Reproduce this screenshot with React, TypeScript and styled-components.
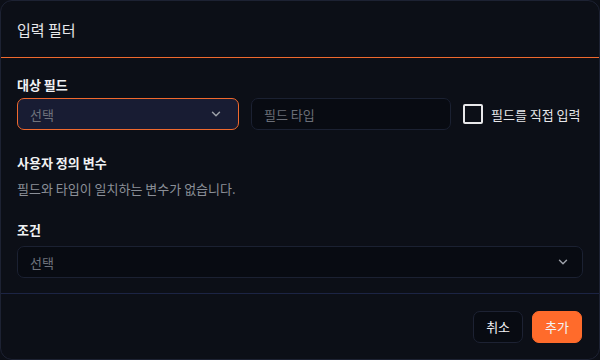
import React from 'react';
import styled, { createGlobalStyle } from 'styled-components';

const GlobalStyle = createGlobalStyle`
  html, body {
    margin: 0;
    padding: 0;
    background: #0c0f17;
  }
  body {
    font-family: "Noto Sans CJK KR", "Noto Sans", sans-serif;
  }
`;

const Dialog = styled.div`
  box-sizing: border-box;
  width: 600px;
  height: 360px;
  background: #0c0f17;
  border: 1px solid #1d2233;
  border-radius: 12px;
  display: flex;
  flex-direction: column;
  overflow: hidden;
`;

const Header = styled.div`
  flex-shrink: 0;
  height: 56px;
  padding: 0 16px;
  display: flex;
  align-items: center;
  border-bottom: 1px solid #f0692e;
  color: #e8e9ec;
  font-size: 15px;
  font-weight: 400;
`;

const Body = styled.div`
  flex: 1;
  min-height: 0;
  padding: 18px 16px 0;
  display: flex;
  flex-direction: column;
`;

const Section = styled.div<{ $gap?: number; $after?: number }>`
  display: flex;
  flex-direction: column;
  gap: ${({ $gap }) => $gap ?? 6}px;
  margin-bottom: ${({ $after }) => $after ?? 0}px;
`;

const Label = styled.div`
  color: #f1f2f4;
  font-size: 13px;
  font-weight: 700;
  line-height: 18px;
`;

const Hint = styled.div`
  color: #8b8f98;
  font-size: 13px;
  line-height: 18px;
`;

const Row = styled.div`
  display: flex;
  align-items: center;
  gap: 12px;
`;

const Select = styled.div<{ $active?: boolean; $width?: string }>`
  box-sizing: border-box;
  width: ${({ $width }) => $width ?? '100%'};
  height: 32px;
  padding: 0 ${({ $active }) => ($active ? 15 : 12)}px 0 12px;
  display: flex;
  align-items: center;
  justify-content: space-between;
  border-radius: 7px;
  border: 1px solid ${({ $active }) => ($active ? '#f0692e' : '#1b2132')};
  background: ${({ $active }) => ($active ? '#181c33' : '#080b12')};
  color: #6f737c;
  font-size: 13px;
`;

const Input = styled.div`
  box-sizing: border-box;
  width: 200px;
  height: 32px;
  padding: 0 12px;
  display: flex;
  align-items: center;
  border-radius: 7px;
  border: 1px solid #1b2132;
  background: #080b12;
  color: #6a6e77;
  font-size: 13px;
`;

const CheckWrap = styled.label`
  display: flex;
  align-items: center;
  gap: 8px;
  color: #e6e7ea;
  font-size: 13px;
`;

const CheckBox = styled.span`
  box-sizing: border-box;
  width: 20px;
  height: 20px;
  border: 2px solid #e8e8ea;
  border-radius: 2px;
`;

const Footer = styled.div`
  flex-shrink: 0;
  height: 65px;
  border-top: 1px solid #1c2444;
  padding: 0 17px 0 0;
  display: flex;
  align-items: center;
  justify-content: flex-end;
  gap: 9px;
`;

const Button = styled.button<{ $primary?: boolean }>`
  box-sizing: border-box;
  height: 32px;
  padding: 0 12px;
  border-radius: 7px;
  font-family: inherit;
  font-size: 13px;
  color: #f3f3f5;
  border: 1px solid ${({ $primary }) => ($primary ? '#ff6b2b' : '#1d2233')};
  background: ${({ $primary }) => ($primary ? '#ff6b2b' : '#080b12')};
`;

const Chevron = () => (
  <svg width="14" height="14" viewBox="0 0 24 24" fill="none" stroke="#9a9ea6" strokeWidth="2.5" strokeLinecap="round" strokeLinejoin="round">
    <polyline points="6 9 12 15 18 9" />
  </svg>
);

export default function App() {
  return (
    <>
      <GlobalStyle />
      <Dialog>
        <Header>입력 필터</Header>
        <Body>
          <Section $gap={4} $after={24}>
            <Label>대상 필드</Label>
            <Row>
              <Select $active $width="222px">
                <span>선택</span>
                <Chevron />
              </Select>
              <Input>필드 타입</Input>
              <CheckWrap>
                <CheckBox />
                필드를 직접 입력
              </CheckWrap>
            </Row>
          </Section>
          <Section $gap={8} $after={23}>
            <Label>사용자 정의 변수</Label>
            <Hint>필드와 타입이 일치하는 변수가 없습니다.</Hint>
          </Section>
          <Section $gap={7}>
            <Label>조건</Label>
            <Select>
              <span>선택</span>
              <Chevron />
            </Select>
          </Section>
        </Body>
        <Footer>
          <Button>취소</Button>
          <Button $primary>추가</Button>
        </Footer>
      </Dialog>
    </>
  );
}
